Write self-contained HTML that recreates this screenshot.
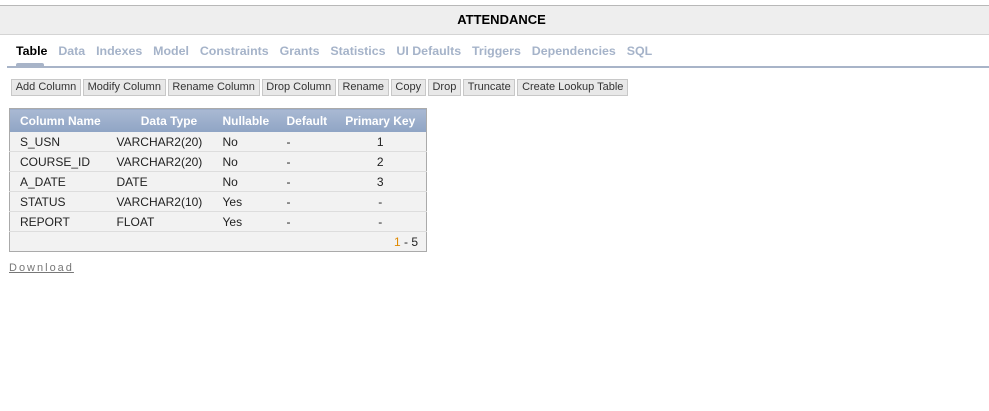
<!DOCTYPE html>
<html><head><style>
body{margin:0;background:#fff;font-family:"Liberation Sans",Arial,sans-serif;width:989px;height:411px;overflow:hidden;position:relative}
.hdr{position:absolute;left:0;top:5px;width:989px;height:28px;background:#eeeeee;border-top:1px solid #b8b8b8;border-bottom:1px solid #d4d4d4}
.hdr div{text-align:center;font-weight:bold;font-size:13px;line-height:27px;color:#000;padding-left:14px}
.tabs{position:absolute;left:16px;top:44px;font-size:12.4px;font-weight:bold;color:#a5b3c9;white-space:nowrap}
.tabs span{margin-right:10.9px}
.tabs span.a{color:#000}
.tabline{position:absolute;left:7px;top:66px;width:982px;height:2px;background:#a8b4c8}
.tabsel{position:absolute;left:16px;top:63px;width:28px;height:4px;background:#a8b4c8;border-radius:2px 2px 0 0}
.btns{position:absolute;left:11px;top:79px;font-size:11px;white-space:nowrap}
.btns span{display:inline-block;border:1px solid #c8c8c8;background:#e8e8e8;color:#333;padding:0 3.7px;height:15px;line-height:15px;margin-right:2px}
table{position:absolute;left:9px;top:108px;width:418px;table-layout:fixed;border-collapse:collapse;border:1px solid #aaa;font-size:12px;color:#222}
th{height:23px;padding:0;background:linear-gradient(#a9b9d3,#8fa4c4);color:#fff;font-weight:bold;font-size:12px}
td{height:19px;padding:0;background:#f2f2f2;border-bottom:1px solid #ddd;white-space:nowrap}
.dl{position:absolute;left:9px;top:262px;font-size:11px;letter-spacing:2px;color:#777;text-decoration:underline}
</style></head><body>
<div class="hdr"><div>ATTENDANCE</div></div>
<div class="tabs"><span class="a">Table</span><span>Data</span><span>Indexes</span><span>Model</span><span>Constraints</span><span>Grants</span><span>Statistics</span><span>UI Defaults</span><span>Triggers</span><span>Dependencies</span><span>SQL</span></div>
<div class="tabsel"></div><div class="tabline"></div>
<div class="btns"><span>Add Column</span><span>Modify Column</span><span>Rename Column</span><span>Drop Column</span><span>Rename</span><span>Copy</span><span>Drop</span><span>Truncate</span><span>Create Lookup Table</span></div>
<table>
<colgroup><col style="width:107px"><col style="width:105px"><col style="width:65px"><col style="width:48px"><col></colgroup>
<tr><th style="text-align:left;padding-left:10px">Column Name</th><th>Data Type</th><th style="text-align:left;padding-left:1px">Nullable</th><th style="text-align:left">Default</th><th>Primary Key</th></tr>
<tr><td style="padding-left:10px">S_USN</td><td>VARCHAR2(20)</td><td style="padding-left:1px">No</td><td>-</td><td style="text-align:center">1</td></tr>
<tr><td style="padding-left:10px">COURSE_ID</td><td>VARCHAR2(20)</td><td style="padding-left:1px">No</td><td>-</td><td style="text-align:center">2</td></tr>
<tr><td style="padding-left:10px">A_DATE</td><td>DATE</td><td style="padding-left:1px">No</td><td>-</td><td style="text-align:center">3</td></tr>
<tr><td style="padding-left:10px">STATUS</td><td>VARCHAR2(10)</td><td style="padding-left:1px">Yes</td><td>-</td><td style="text-align:center">-</td></tr>
<tr><td style="padding-left:10px">REPORT</td><td>FLOAT</td><td style="padding-left:1px">Yes</td><td>-</td><td style="text-align:center">-</td></tr>
<tr><td colspan="5" style="text-align:right;padding-right:8px;border-bottom:0"><span style="color:#e08a00">1</span> - 5</td></tr>
</table>
<div class="dl">Download</div>
</body></html>
